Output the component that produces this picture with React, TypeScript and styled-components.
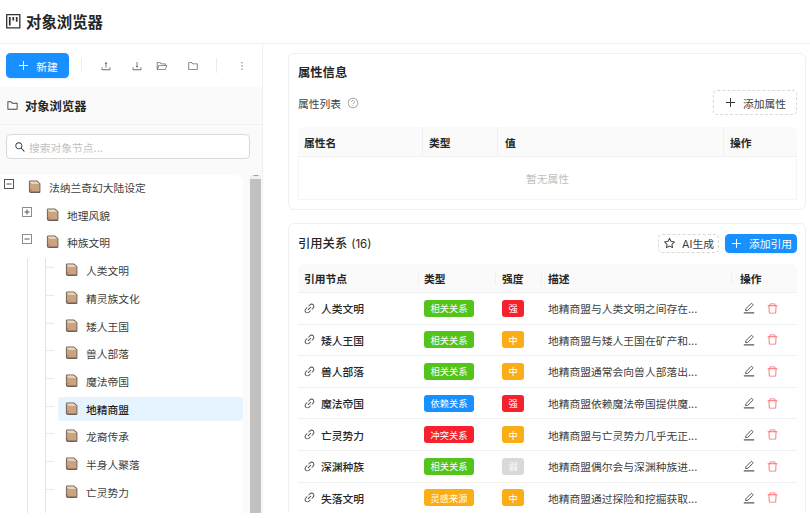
import React from "react";
import styled, { createGlobalStyle } from "styled-components";
import {
  AiOutlineProject, AiOutlinePlus, AiOutlineUpload, AiOutlineDownload, AiOutlineFolderOpen,
  AiOutlineFolder, AiOutlineMore, AiOutlineSearch, AiOutlineQuestionCircle, AiOutlineStar,
  AiOutlineLink, AiOutlineDelete,
} from "react-icons/ai";

const Global = createGlobalStyle`
  html, body { margin: 0; padding: 0; background: #fff; }
  body { font-family: Inter, "Noto Sans CJK SC", sans-serif; color: rgba(0,0,0,.85); font-size: 10.78px; }
  * { box-sizing: border-box; }
`;

const Page = styled.div`width: 810px; height: 513px; overflow: hidden; display: flex; flex-direction: column;`;
const Header = styled.header`
  height: 44px; flex: none; display: flex; align-items: center; gap: 3.5px; padding: 0 4px 1px;
  border-bottom: 1px solid #f0f0f0; font-size: 15.4px; font-weight: 600; color: #262626;
  svg { font-size: 18.5px; color: #333; }
`;
const Body = styled.div`flex: 1; min-height: 0; display: flex;`;
const Left = styled.aside`width: 263px; flex: none; display: flex; flex-direction: column; border-right: 1px solid #f0f0f0;`;
const Toolbar = styled.div`height: 43px; flex: none; display: flex; align-items: center; padding: 0 0 0 6px; background: #fff;`;
const PrimaryButton = styled.button<{ $w: number; $h: number }>`
  width: ${p => p.$w}px; height: ${p => p.$h}px; border: 0; border-radius: 4.5px; background: #1890ff; color: #fff;
  font-family: inherit; font-size: 10.78px; display: inline-flex; align-items: center; justify-content: center; gap: 6px; padding: 0;
  box-shadow: 0 1px 2px rgba(24,144,255,.15);
  svg { font-size: 13px; }
`;
const VDivider = styled.span<{ $ml: number }>`width: 1px; height: 15px; background: #ececec; margin-left: ${p => p.$ml}px;`;
const ToolIcon = styled.span<{ $ml: number }>`
  margin-left: ${p => p.$ml}px; display: inline-flex; color: #6e6e6e; font-size: 12px; width: 12px; justify-content: center;
`;
const PanelHead = styled.div`
  height: 38px; flex: none; display: flex; align-items: center; gap: 6px; padding: 0 6px; background: #fafafa;
  border-bottom: 1px solid #f0f0f0; font-size: 12.3px; font-weight: 600; color: #262626;
  svg { font-size: 13px; color: #444; }
`;
const SearchArea = styled.div`height: 50px; flex: none; padding: 9px 12px 0 6px; background: #fafafa;`;
const SearchBox = styled.div`
  height: 25px; border: 1px solid #d9d9d9; border-radius: 4.5px; background: #fff; display: flex; align-items: center;
  gap: 3px; padding: 0 7px; color: #bfbfbf; svg { color: #333; font-size: 12px; }
`;
const TreeArea = styled.div`flex: 1; min-height: 0; display: flex; background: #fafafa; overflow: hidden;`;
const Tree = styled.div`width: 243px; flex: none; background: #fff; border-top-right-radius: 8px; overflow: hidden; height: 360px;`;
const Scrollbar = styled.div`
  width: 11px; flex: none; margin-left: 7px; background: #f1f1f1; display: flex; flex-direction: column; align-items: center; height: calc(100% + 6px); margin-top: -6px;
`;
const ScrollArrow = styled.span`width: 0; height: 0; margin: 4px 0 3px; border: 3px solid transparent; border-top: 0; border-bottom: 3.5px solid #a3a3a3;`;
const ScrollThumb = styled.span`width: 100%; flex: 1; background: #c1c1c1;`;
const Group = styled.div<{ $ml: number }>`margin-left: ${p => p.$ml}px; border-left: 1px solid #e4e4e4; min-height: 270px;`;
const NodeRow = styled.div<{ $pl: number; $selected?: boolean; $tick?: boolean; $ml?: number }>`
  position: relative; height: 24px; margin-bottom: 3.73px; margin-left: ${p => p.$ml ?? 0}px; padding-left: ${p => p.$pl}px;
  display: flex; align-items: center; border-radius: 3px; white-space: nowrap; color: #404040;
  background: ${p => (p.$selected ? "#e6f4ff" : "transparent")};
  font-weight: ${p => (p.$selected ? 500 : 400)};
  ${p => p.$selected && "color: #1f1f1f;"}
  ${p => p.$tick && `&::before { content: ""; position: absolute; left: -12px; top: 9px; width: 8px; height: 1px; background: #e8e8e8; }`}
`;
const ToggleSlot = styled.span`width: 25px; flex: none; display: inline-flex; margin-top: -6px;`;
const NodeLabel = styled.span`margin-left: 8px;`;

const Right = styled.main`flex: 1; min-width: 0; padding: 9px 4px 0 25px; display: flex; flex-direction: column; gap: 13px; overflow: hidden;`;
const Card = styled.section<{ $h: number }>`
  flex: none; border: 1px solid #f0f0f0; border-radius: 6px; padding: 0 8px 0 9px; height: ${p => p.$h}px;
`;
const CardTitle = styled.h3`margin: 0; font-size: 12.3px; font-weight: 600; color: #262626; height: 36px; display: flex; align-items: center;`;
const SubRow = styled.div`height: 25px; display: flex; align-items: center; justify-content: space-between; margin-bottom: 12px; color: #404040;`;
const SubLabel = styled.div`display: flex; align-items: center; gap: 6px; svg { font-size: 12px; color: #a8a8a8; }`;
const DashedButton = styled.button<{ $w: number; $h: number }>`
  width: ${p => p.$w}px; height: ${p => p.$h}px; border: 1px dashed #d9d9d9; border-radius: 4.5px; background: #fff; color: #404040;
  font-family: inherit; font-size: 10.78px; display: inline-flex; align-items: center; justify-content: center; gap: 6px; padding: 0;
  svg { font-size: 13px; color: #333; }
`;
const PropGrid = styled.div`border-radius: 6px 6px 0 0; overflow: hidden;`;
const GridRow = styled.div<{ $cols: string }>`display: grid; grid-template-columns: ${p => p.$cols};`;
const HeadCell = styled.div<{ $pl?: number; $full?: boolean; $last?: boolean; $h: number }>`
  position: relative; height: ${p => p.$h}px; display: flex; align-items: center; padding-left: ${p => p.$pl ?? 6}px; background: #fafafa;
  border-bottom: 1px solid #f0f0f0; font-weight: 600; color: #262626;
  ${p => !p.$last && `&::after { content: ""; position: absolute; right: 0; width: 1px; background: #f0f0f0; top: ${p.$full ? 0 : "25%"}; bottom: ${p.$full ? 0 : "25%"}; }`}
`;
const EmptyRow = styled.div`
  height: 43px; display: flex; align-items: center; justify-content: center; color: #bfbfbf;
  border: 1px solid #f5f5f5; border-top: 0;
`;
const RefHeadRow = styled.div`display: flex; align-items: center; justify-content: space-between; height: 38px; margin-bottom: 2px;`;
const RefTitle = styled.h3`margin: 0; font-size: 12.3px; font-weight: 500; color: #262626; span { font-size: 11.5px; font-weight: 400; margin-left: 4px; }`;
const RefActions = styled.div`display: flex; gap: 6px; align-items: center;`;
const RefGrid = styled.div`border-radius: 6px 6px 0 0; overflow: hidden;`;
const BodyCell = styled.div<{ $pl?: number }>`
  height: 31.6px; display: flex; align-items: center; padding-left: ${p => p.$pl ?? 6}px; border-bottom: 1px solid #f0f0f0; color: #404040; white-space: nowrap;
`;
const RefName = styled.span`
  display: inline-flex; align-items: center; gap: 5px; font-weight: 500; color: #262626;
  svg { font-size: 13px; color: #404040; }
`;
const Tag = styled.span<{ $bg: string; $w: number }>`
  width: ${p => p.$w}px; height: 17px; border-radius: 3px; background: ${p => p.$bg}; color: #fff;
  font-size: 9.24px; display: inline-flex; align-items: center; justify-content: center;
`;
const Actions = styled.span`display: inline-flex; gap: 11px; align-items: center; margin-left: 4px;`;
const DeleteIcon = styled.span`display: inline-flex; color: #ff6b70; font-size: 13px;`;

const NodeIcon = () => (
  <svg width="13" height="14" viewBox="0 0 13 14" style={{ flex: "none", marginLeft: -1 }}>
    <path d="M2.4 .6H9L12.4 3.4V11.8Q12.4 13 11.2 13H3Q.9 13 .9 11V2Q.9 .6 2.4 .6Z" fill="#6a6058" />
    <path d="M2.8 1.5H8.6L11.5 3.9V11.5H3.4Q1.8 11.5 1.8 10V2.5Q1.8 1.5 2.8 1.5Z" fill="#c9a47f" />
    <path d="M2.8 1.5H8.6L11.5 3.9H4L1.8 2.5Q1.8 1.5 2.8 1.5Z" fill="#e6d2bd" />
    <circle cx="2.9" cy="9.6" r=".8" fill="#e8597a" />
  </svg>
);

const Toggle = ({ open, dark }: { open: boolean; dark?: boolean }) => (
  <svg width="10" height="10" viewBox="0 0 10 10">
    <rect x=".5" y=".5" width="9" height="9" fill="#fff" stroke={dark ? "#555" : "#8c8c8c"} />
    <path d={open ? "M2.5 5H7.5" : "M2.5 5H7.5M5 2.5V7.5"} stroke="#555" strokeWidth="1" />
  </svg>
);

const PencilLine = () => (
  <svg width="12" height="12" viewBox="0 0 12 12" fill="none" stroke="#595959" strokeWidth="1">
    <path d="M2.6 8.6 3 6.6 7.9 1.7Q8.5 1.1 9.2 1.7L9.7 2.2Q10.3 2.9 9.7 3.5L4.8 8.3Z" />
    <path d="M.8 10.9H11.2" strokeWidth="1.1" />
  </svg>
);

const leaves = ["人类文明", "精灵族文化", "矮人王国", "兽人部落", "魔法帝国", "地精商盟", "龙裔传承", "半身人聚落", "亡灵势力"];

const refs = [
  { n: "人类文明", t: "相关关系", tc: "#52c41a", s: "强", d: "地精商盟与人类文明之间存在..." },
  { n: "矮人王国", t: "相关关系", tc: "#52c41a", s: "中", d: "地精商盟与矮人王国在矿产和..." },
  { n: "兽人部落", t: "相关关系", tc: "#52c41a", s: "中", d: "地精商盟通常会向兽人部落出..." },
  { n: "魔法帝国", t: "依赖关系", tc: "#1890ff", s: "强", d: "地精商盟依赖魔法帝国提供魔..." },
  { n: "亡灵势力", t: "冲突关系", tc: "#f5222d", s: "中", d: "地精商盟与亡灵势力几乎无正..." },
  { n: "深渊种族", t: "相关关系", tc: "#52c41a", s: "弱", d: "地精商盟偶尔会与深渊种族进..." },
  { n: "失落文明", t: "灵感来源", tc: "#faad14", s: "中", d: "地精商盟通过探险和挖掘获取..." },
];
const strengthBg: Record<string, string> = { 强: "#f5222d", 中: "#faad14", 弱: "#d9d9d9" };

const propCols = "125px 75px 226px 1fr";
const refCols = "121px 77px 46px 190px 1fr";

export default function App() {
  return (
    <Page>
      <Global />
      <Header><AiOutlineProject />对象浏览器</Header>
      <Body>
        <Left>
          <Toolbar>
            <PrimaryButton $w={63} $h={25}><AiOutlinePlus />新建</PrimaryButton>
            <VDivider $ml={12} />
            <ToolIcon $ml={18}><AiOutlineUpload /></ToolIcon>
            <ToolIcon $ml={19}><AiOutlineDownload /></ToolIcon>
            <ToolIcon $ml={13}><AiOutlineFolderOpen /></ToolIcon>
            <ToolIcon $ml={19}><AiOutlineFolder /></ToolIcon>
            <VDivider $ml={17} />
            <ToolIcon $ml={19}><AiOutlineMore /></ToolIcon>
          </Toolbar>
          <PanelHead><AiOutlineFolder />对象浏览器</PanelHead>
          <SearchArea>
            <SearchBox><AiOutlineSearch />搜索对象节点...</SearchBox>
          </SearchArea>
          <TreeArea>
            <Tree>
              <NodeRow $pl={4}><ToggleSlot><Toggle open dark /></ToggleSlot><NodeIcon /><NodeLabel>法纳兰奇幻大陆设定</NodeLabel></NodeRow>
              <NodeRow $pl={22}><ToggleSlot><Toggle open={false} /></ToggleSlot><NodeIcon /><NodeLabel>地理风貌</NodeLabel></NodeRow>
              <NodeRow $pl={22}><ToggleSlot><Toggle open /></ToggleSlot><NodeIcon /><NodeLabel>种族文明</NodeLabel></NodeRow>
              <Group $ml={27}>
                <Group $ml={17}>
                  {leaves.map(l => (
                    <NodeRow key={l} $ml={12} $pl={8} $tick $selected={l === "地精商盟"}>
                      <NodeIcon /><NodeLabel>{l}</NodeLabel>
                    </NodeRow>
                  ))}
                </Group>
              </Group>
            </Tree>
            <Scrollbar><ScrollArrow /><ScrollThumb /></Scrollbar>
          </TreeArea>
        </Left>
        <Right>
          <Card $h={157}>
            <CardTitle>属性信息</CardTitle>
            <SubRow>
              <SubLabel>属性列表<AiOutlineQuestionCircle /></SubLabel>
              <DashedButton $w={84} $h={25}><AiOutlinePlus />添加属性</DashedButton>
            </SubRow>
            <PropGrid>
              <GridRow $cols={propCols}>
                <HeadCell $h={30} $full>属性名</HeadCell>
                <HeadCell $h={30} $full>类型</HeadCell>
                <HeadCell $h={30} $full $pl={7}>值</HeadCell>
                <HeadCell $h={30} $last>操作</HeadCell>
              </GridRow>
              <EmptyRow>暂无属性</EmptyRow>
            </PropGrid>
          </Card>
          <Card $h={320}>
            <RefHeadRow>
              <RefTitle>引用关系<span>(16)</span></RefTitle>
              <RefActions>
                <DashedButton $w={61} $h={19}><AiOutlineStar />AI生成</DashedButton>
                <PrimaryButton $w={72} $h={19}><AiOutlinePlus />添加引用</PrimaryButton>
              </RefActions>
            </RefHeadRow>
            <RefGrid>
              <GridRow $cols={refCols}>
                <HeadCell $h={29}>引用节点</HeadCell>
                <HeadCell $h={29} $pl={5}>类型</HeadCell>
                <HeadCell $h={29}>强度</HeadCell>
                <HeadCell $h={29}>描述</HeadCell>
                <HeadCell $h={29} $last $pl={8}>操作</HeadCell>
              </GridRow>
              {refs.map(r => (
                <GridRow $cols={refCols} key={r.n}>
                  <BodyCell $pl={5}><RefName><AiOutlineLink />{r.n}</RefName></BodyCell>
                  <BodyCell $pl={5}><Tag $bg={r.tc} $w={50}>{r.t}</Tag></BodyCell>
                  <BodyCell><Tag $bg={strengthBg[r.s]} $w={22}>{r.s}</Tag></BodyCell>
                  <BodyCell>{r.d}</BodyCell>
                  <BodyCell $pl={7}>
                    <Actions><PencilLine /><DeleteIcon><AiOutlineDelete /></DeleteIcon></Actions>
                  </BodyCell>
                </GridRow>
              ))}
            </RefGrid>
          </Card>
        </Right>
      </Body>
    </Page>
  );
}
